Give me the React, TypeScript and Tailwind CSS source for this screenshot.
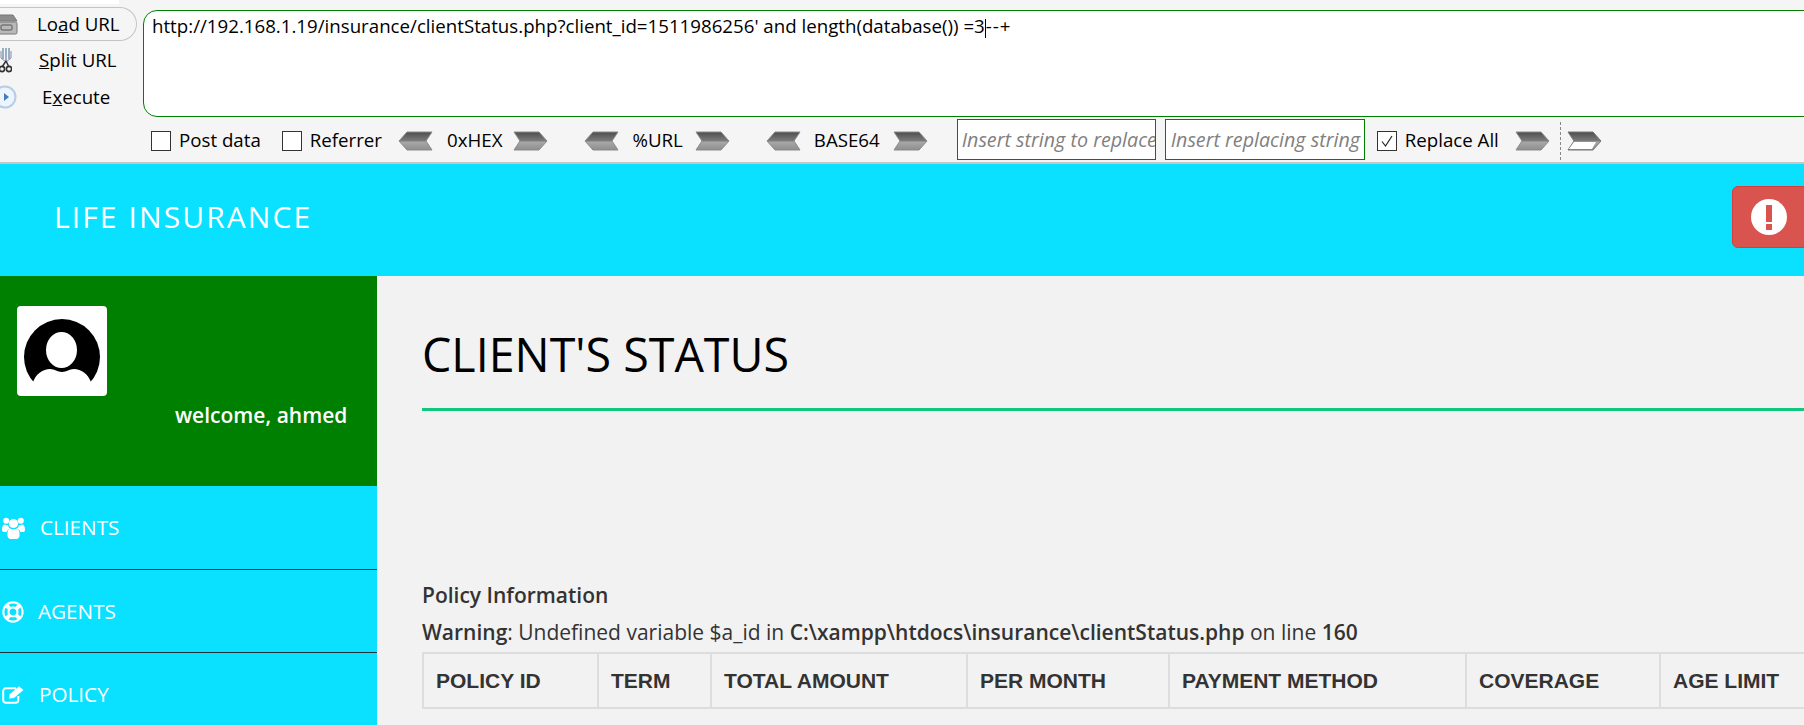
import React from 'react';
import { FaRegLifeRing } from 'react-icons/fa';

const Chevron = ({ dir, hollow }: { dir: 'left' | 'right'; hollow?: boolean }) => (
  <svg width="35" height="20" viewBox="0 0 35 20" className="shrink-0">
    <defs>
      <linearGradient id="chev" x1="0" y1="0" x2="0" y2="1">
        <stop offset="0" stopColor="#4e4e4e" />
        <stop offset="0.5" stopColor="#7c7c7c" />
        <stop offset="0.55" stopColor="#a8a8a8" />
        <stop offset="1" stopColor="#8e8e8e" />
      </linearGradient>
    </defs>
    {dir === 'left' ? (
      <path d="M9 1H34L28 10L34 19H9L1 10Z" fill="url(#chev)" stroke="#8a8a8a" strokeWidth="1" />
    ) : hollow ? (
      <>
        <path d="M1 1H26L34 10L26 19H1L7 10Z" fill="url(#chev)" stroke="#777" strokeWidth="1" />
        <path d="M7 11H29L25 18H2Z" fill="#fff" />
      </>
    ) : (
      <path d="M1 1H26L34 10L26 19H1L7 10Z" fill="url(#chev)" stroke="#8a8a8a" strokeWidth="1" />
    )}
  </svg>
);

const Check = ({ checked }: { checked?: boolean }) => (
  <span className="w-[20px] h-[20px] border border-[#333] bg-white flex items-center justify-center shrink-0">
    {checked && (
      <svg width="14" height="14" viewBox="0 0 14 14">
        <path d="M2 7.5L5.5 12L12 2" fill="none" stroke="#222" strokeWidth="1.2" />
      </svg>
    )}
  </span>
);

const LoadIcon = () => (
  <svg width="18" height="22" viewBox="0 0 18 22" className="shrink-0">
    <path d="M-6 8L-3 2H13L17 8Z" fill="#8d8d8d" stroke="#777" />
    <rect x="-6" y="9" width="23" height="12" rx="1.5" fill="#b9b9b9" stroke="#777" />
    <rect x="1" y="12" width="11" height="5" rx="1" fill="none" stroke="#555" />
  </svg>
);

const SplitIcon = () => (
  <svg width="12" height="26" viewBox="0 0 12 26" className="shrink-0">
    <path d="M3 1V12M6 1V14M9 1V12" stroke="#7c96b4" strokeWidth="1.5" fill="none" />
    <path d="M1 4V11L6 15L11 11V4" stroke="#88a" strokeWidth="1" fill="none" />
    <path d="M6 14L2 20M6 14L9 20" stroke="#333" strokeWidth="1.5" />
    <circle cx="2" cy="22" r="2.6" fill="none" stroke="#333" strokeWidth="1.6" />
    <circle cx="9" cy="22" r="2.6" fill="none" stroke="#333" strokeWidth="1.6" />
  </svg>
);

const ExecuteIcon = () => (
  <svg width="18" height="24" viewBox="0 0 18 24" className="shrink-0">
    <circle cx="5" cy="12" r="10.5" fill="#eef4fb" stroke="#b5cde8" strokeWidth="2" />
    <path d="M4 8L9 12L4 16Z" fill="#3f7fc0" />
  </svg>
);

const UsersIcon = () => (
  <svg width="23" height="22" viewBox="0 0 23 22" className="shrink-0" fill="#fff">
    <circle cx="11.5" cy="6.5" r="4.6" />
    <circle cx="4.2" cy="3.8" r="3" />
    <circle cx="18.8" cy="3.8" r="3" />
    <path d="M0 13C0 9 1.5 7.6 3 7.6C4 8.4 5 8.4 6 8C6.3 9.6 7 10.6 8 11.4C6 12 5 13.4 4.8 15H2C1 15 0 14.4 0 13Z" />
    <path d="M23 13C23 9 21.5 7.6 20 7.6C19 8.4 18 8.4 17 8C16.7 9.6 16 10.6 15 11.4C17 12 18 13.4 18.2 15H21C22 15 23 14.4 23 13Z" />
    <path d="M5.4 18C5.4 14 6.4 11.4 8 11.2C9.4 12.6 13.6 12.6 15 11.2C16.6 11.4 17.6 14 17.6 18C17.6 20.6 16 22 14.4 22H8.6C7 22 5.4 20.6 5.4 18Z" />
  </svg>
);

const EditIcon = () => (
  <svg width="22" height="18" viewBox="0 0 22 18" className="shrink-0">
    <path d="M14 2.2H4A2.8 2.8 0 0 0 1.2 5V14A2.8 2.8 0 0 0 4 16.8H13.5A2.8 2.8 0 0 0 16.3 14V10" fill="none" stroke="#fff" strokeWidth="2" />
    <path d="M7 12.5L7.8 8.2L17 0.3L21.5 4L12 12Z" fill="#fff" />
  </svg>
);

const AlertIcon = () => (
  <svg width="36" height="36" viewBox="0 0 36 36" className="shrink-0">
    <circle cx="18" cy="18" r="18" fill="#fff" />
    <rect x="15" y="6" width="6" height="17" fill="#d9534f" />
    <rect x="15" y="25" width="6" height="6" fill="#d9534f" />
  </svg>
);

const Avatar = () => (
  <div className="w-[90px] h-[90px] bg-white rounded-[4px] overflow-hidden">
    <svg width="90" height="90" viewBox="0 0 90 90">
      <circle cx="45" cy="51" r="38" fill="#000" />
      <path d="M16 76C19 68 26 63 33 63C38 63 40 66 45 66C50 66 52 63 57 63C64 63 71 68 74 76V90H16Z" fill="#fff" />
      <ellipse cx="44.5" cy="44" rx="15.5" ry="18" fill="#fff" />
    </svg>
  </div>
);

const menu = [
  { label: 'CLIENTS', icon: <UsersIcon />, gap: 'ml-[15px]', row: 'h-[84px] border-b border-[#1d3340]' },
  { label: 'AGENTS', icon: <FaRegLifeRing size={22} className="shrink-0" />, gap: 'ml-[14px]', row: 'h-[83px] pt-[2px] border-b border-[#1d3340]' },
  { label: 'POLICY', icon: <EditIcon />, gap: 'ml-[15px]', row: 'h-[83px]' },
];

const columns = [
  { label: 'POLICY ID', w: 'w-[175px]' },
  { label: 'TERM', w: 'w-[113px]' },
  { label: 'TOTAL AMOUNT', w: 'w-[256px]' },
  { label: 'PER MONTH', w: 'w-[202px]' },
  { label: 'PAYMENT METHOD', w: 'w-[297px]' },
  { label: 'COVERAGE', w: 'w-[194px]' },
  { label: 'AGE LIMIT', w: 'w-[180px]' },
];

export default function App() {
  return (
    <div className="w-[1804px] h-[725px] overflow-hidden flex flex-col bg-[#f2f2f2] font-['Open_Sans',sans-serif]">
      {/* hackbar */}
      <div className="h-[164px] shrink-0 bg-[#f5f5f5] border-b-2 border-[#c6c6c6] flex">
        <div className="w-[143px] shrink-0 flex flex-col text-[18.7px] text-black">
          <div className="w-[119px] h-[4px] bg-white mb-[3px]" />
          <div className="w-[137px] h-[34px] shrink-0 border border-l-0 border-[#c4c4c4] rounded-r-[17px] flex items-center">
            <LoadIcon />
            <span className="ml-[19px]">Lo<u>a</u>d URL</span>
          </div>
          <div className="h-[38px] flex items-center">
            <SplitIcon />
            <span className="ml-[27px]"><u>S</u>plit URL</span>
          </div>
          <div className="h-[36px] flex items-center">
            <ExecuteIcon />
            <span className="ml-[24px]">E<u>x</u>ecute</span>
          </div>
        </div>
        <div className="flex-1 min-w-0 flex flex-col">
          <div className="mt-[10px] h-[107px] shrink-0 -mr-[20px] bg-white border border-[#008000] rounded-[14px] px-[8px] pt-[3px] text-[18.7px] text-black leading-[24px]">
            <span>http://192.168.1.19/insurance/clientStatus.php?client_id=1511986256' and length(database()) =3</span>
            <span className="inline-block w-px h-[19px] bg-black align-middle" />
            <span className="tracking-[1px]">--+</span>
          </div>
          <div className="h-[45px] pt-[2px] shrink-0 flex items-center text-[18.7px] text-black">
            <span className="ml-[8px]"><Check /></span>
            <span className="ml-[8px]">Post data</span>
            <span className="ml-[21px]"><Check /></span>
            <span className="ml-[8px]">Referrer</span>
            <span className="ml-[16px]"><Chevron dir="left" /></span>
            <span className="ml-[14px]">0xHEX</span>
            <span className="ml-[11px]"><Chevron dir="right" /></span>
            <span className="ml-[36px]"><Chevron dir="left" /></span>
            <span className="ml-[13px]">%URL</span>
            <span className="ml-[12px]"><Chevron dir="right" /></span>
            <span className="ml-[36px]"><Chevron dir="left" /></span>
            <span className="ml-[13px]">BASE64</span>
            <span className="ml-[13px]"><Chevron dir="right" /></span>
            <div className="ml-[29px] w-[199px] shrink-0 h-[41px] -mt-[2px] bg-white border border-[#008000] flex items-center pl-[4px] overflow-hidden whitespace-nowrap italic text-[19.7px] text-[#808080]">Insert string to replace</div>
            <div className="ml-[9px] w-[200px] shrink-0 h-[41px] -mt-[2px] bg-white border border-[#008000] flex items-center pl-[5px] overflow-hidden whitespace-nowrap italic text-[19.7px] text-[#808080]">Insert replacing string</div>
            <span className="ml-[12px]"><Check checked /></span>
            <span className="ml-[8px] whitespace-nowrap">Replace All</span>
            <span className="ml-[16px]"><Chevron dir="right" /></span>
            <span className="ml-[10px] h-[38px] border-l border-dashed border-[#888]" />
            <span className="ml-[6px]"><Chevron dir="right" hollow /></span>
          </div>
        </div>
      </div>

      {/* header */}
      <div className="h-[112px] shrink-0 bg-[#0ae0ff] flex items-center justify-between">
        <div className="ml-[54px] -mt-[8px] text-[30px] tracking-[2.1px] text-white">LIFE INSURANCE</div>
        <div className="w-[80px] h-[62px] mb-[6px] -mr-[8px] bg-[#d9534f] border border-[#d43f3a] rounded-[6px] flex items-center pl-[18px]">
          <AlertIcon />
        </div>
      </div>

      <div className="flex-1 min-h-0 flex">
        {/* sidebar */}
        <div className="w-[377px] shrink-0 flex flex-col">
          <div className="h-[210px] shrink-0 bg-[#008000] flex flex-col pt-[30px] pl-[17px]">
            <Avatar />
            <div className="mt-[4px] ml-[158px] text-[21px] font-semibold text-white whitespace-nowrap">welcome, ahmed</div>
          </div>
          <div className="flex-1 bg-[#0ae0ff] flex flex-col">
            {menu.map(m => (
              <div key={m.label} className={`${m.row} shrink-0 flex items-center pl-[2px] text-white text-[20.7px]`}>
                {m.icon}
                <span className={m.gap}>{m.label}</span>
              </div>
            ))}
          </div>
        </div>

        {/* content */}
        <div className="flex-1 min-w-0 pl-[45px] flex flex-col">
          <h1 className="mt-[49px] text-[46.6px] leading-[58px] text-black whitespace-nowrap">CLIENT'S STATUS</h1>
          <div className="mt-[25px] h-[3px] shrink-0 bg-[#10c77f]" />
          <div className="mt-[170px] text-[21px] font-semibold leading-[28px] text-[#333]">Policy Information</div>
          <div className="mt-[10px] text-[21px] leading-[26px] text-[#333] whitespace-nowrap">
            <b className="font-semibold">Warning</b>: Undefined variable $a_id in <b className="font-semibold">C:\xampp\htdocs\insurance\clientStatus.php</b> on line <b className="font-semibold">160</b>
          </div>
          <table className="mt-[7px] table-fixed border-collapse w-[1417px] shrink-0 font-['Liberation_Sans',sans-serif]">
            <thead>
              <tr>
                {columns.map(c => (
                  <th key={c.label} className={`${c.w} h-[55px] border-2 border-[#dddddd] px-[12px] text-left text-[21px] font-bold text-[#333] whitespace-nowrap`}>{c.label}</th>
                ))}
              </tr>
            </thead>
          </table>
        </div>
      </div>
    </div>
  );
}
